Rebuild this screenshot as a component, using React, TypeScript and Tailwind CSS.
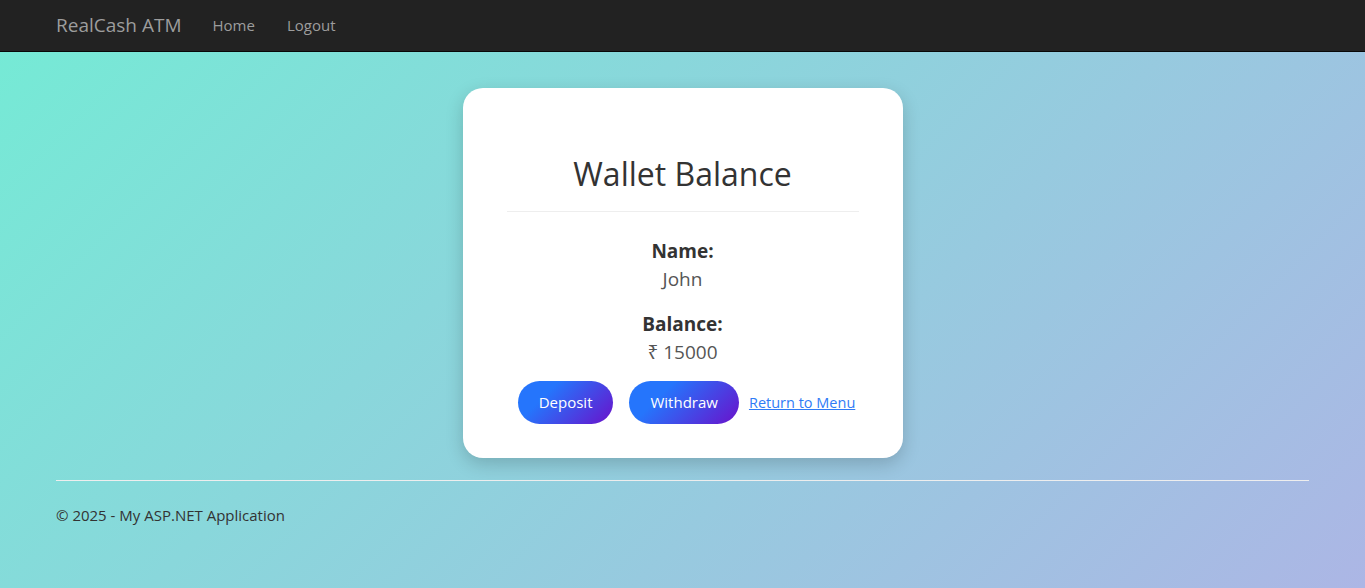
import React from 'react'

const font = { fontFamily: '"Open Sans", "Noto Sans", sans-serif' }

const Navbar = () => (
  <nav className="h-[52px] bg-[#222222] border-b border-[#080808] flex items-center px-[56px]">
    <span className="text-[19px] text-[#9d9d9d] mr-[31px]">RealCash ATM</span>
    <a className="text-[15px] text-[#9d9d9d] mr-[32px]">Home</a>
    <a className="text-[15px] text-[#9d9d9d]">Logout</a>
  </nav>
)

const GradientButton = ({ label, className }: { label: string; className?: string }) => (
  <button
    className={`h-[43px] px-[21px] rounded-full text-[15px] text-white bg-[linear-gradient(135deg,#2575fc_30%,#6a11cb)] ${className ?? ''}`}
  >
    {label}
  </button>
)

const WalletCard = () => (
  <div className="w-[440px] bg-white rounded-[20px] shadow-[0_6px_18px_rgba(0,0,0,0.18)] px-[44px] pt-[40px] pb-[34px] text-center">
    <h2 className="mt-[28px] mb-[20px] text-[32px] leading-[1.1] font-medium text-[#333]">Wallet Balance</h2>
    <hr className="border-t border-[#eeeeee]" />
    <div className="mt-[25px] text-[19px] leading-[28px]">
      <div className="font-bold text-[#333]">Name:</div>
      <div className="text-[#555]">John</div>
    </div>
    <div className="mt-[17px] text-[19px] leading-[28px]">
      <div className="font-bold text-[#333]">Balance:</div>
      <div className="text-[#555]">₹ 15000</div>
    </div>
    <div className="mt-[15px] pl-[8px] flex justify-center items-center">
      <GradientButton label="Deposit" className="mr-[16px]" />
      <GradientButton label="Withdraw" className="mr-[10px]" />
      <a className="text-[14.5px] text-[#2f7bf6] underline">Return to Menu</a>
    </div>
  </div>
)

export default function App() {
  return (
    <div style={font} className="min-h-[588px] bg-[linear-gradient(135deg,#74ebd5,#acb6e5)]">
      <Navbar />
      <div className="px-[56px]">
        <div className="flex justify-center pt-[36px]">
          <WalletCard />
        </div>
        <hr className="mt-[22px] border-t border-[#eeeeee]" />
        <footer className="pt-[23px] text-[15px] text-[#333]">© 2025 - My ASP.NET Application</footer>
      </div>
    </div>
  )
}
